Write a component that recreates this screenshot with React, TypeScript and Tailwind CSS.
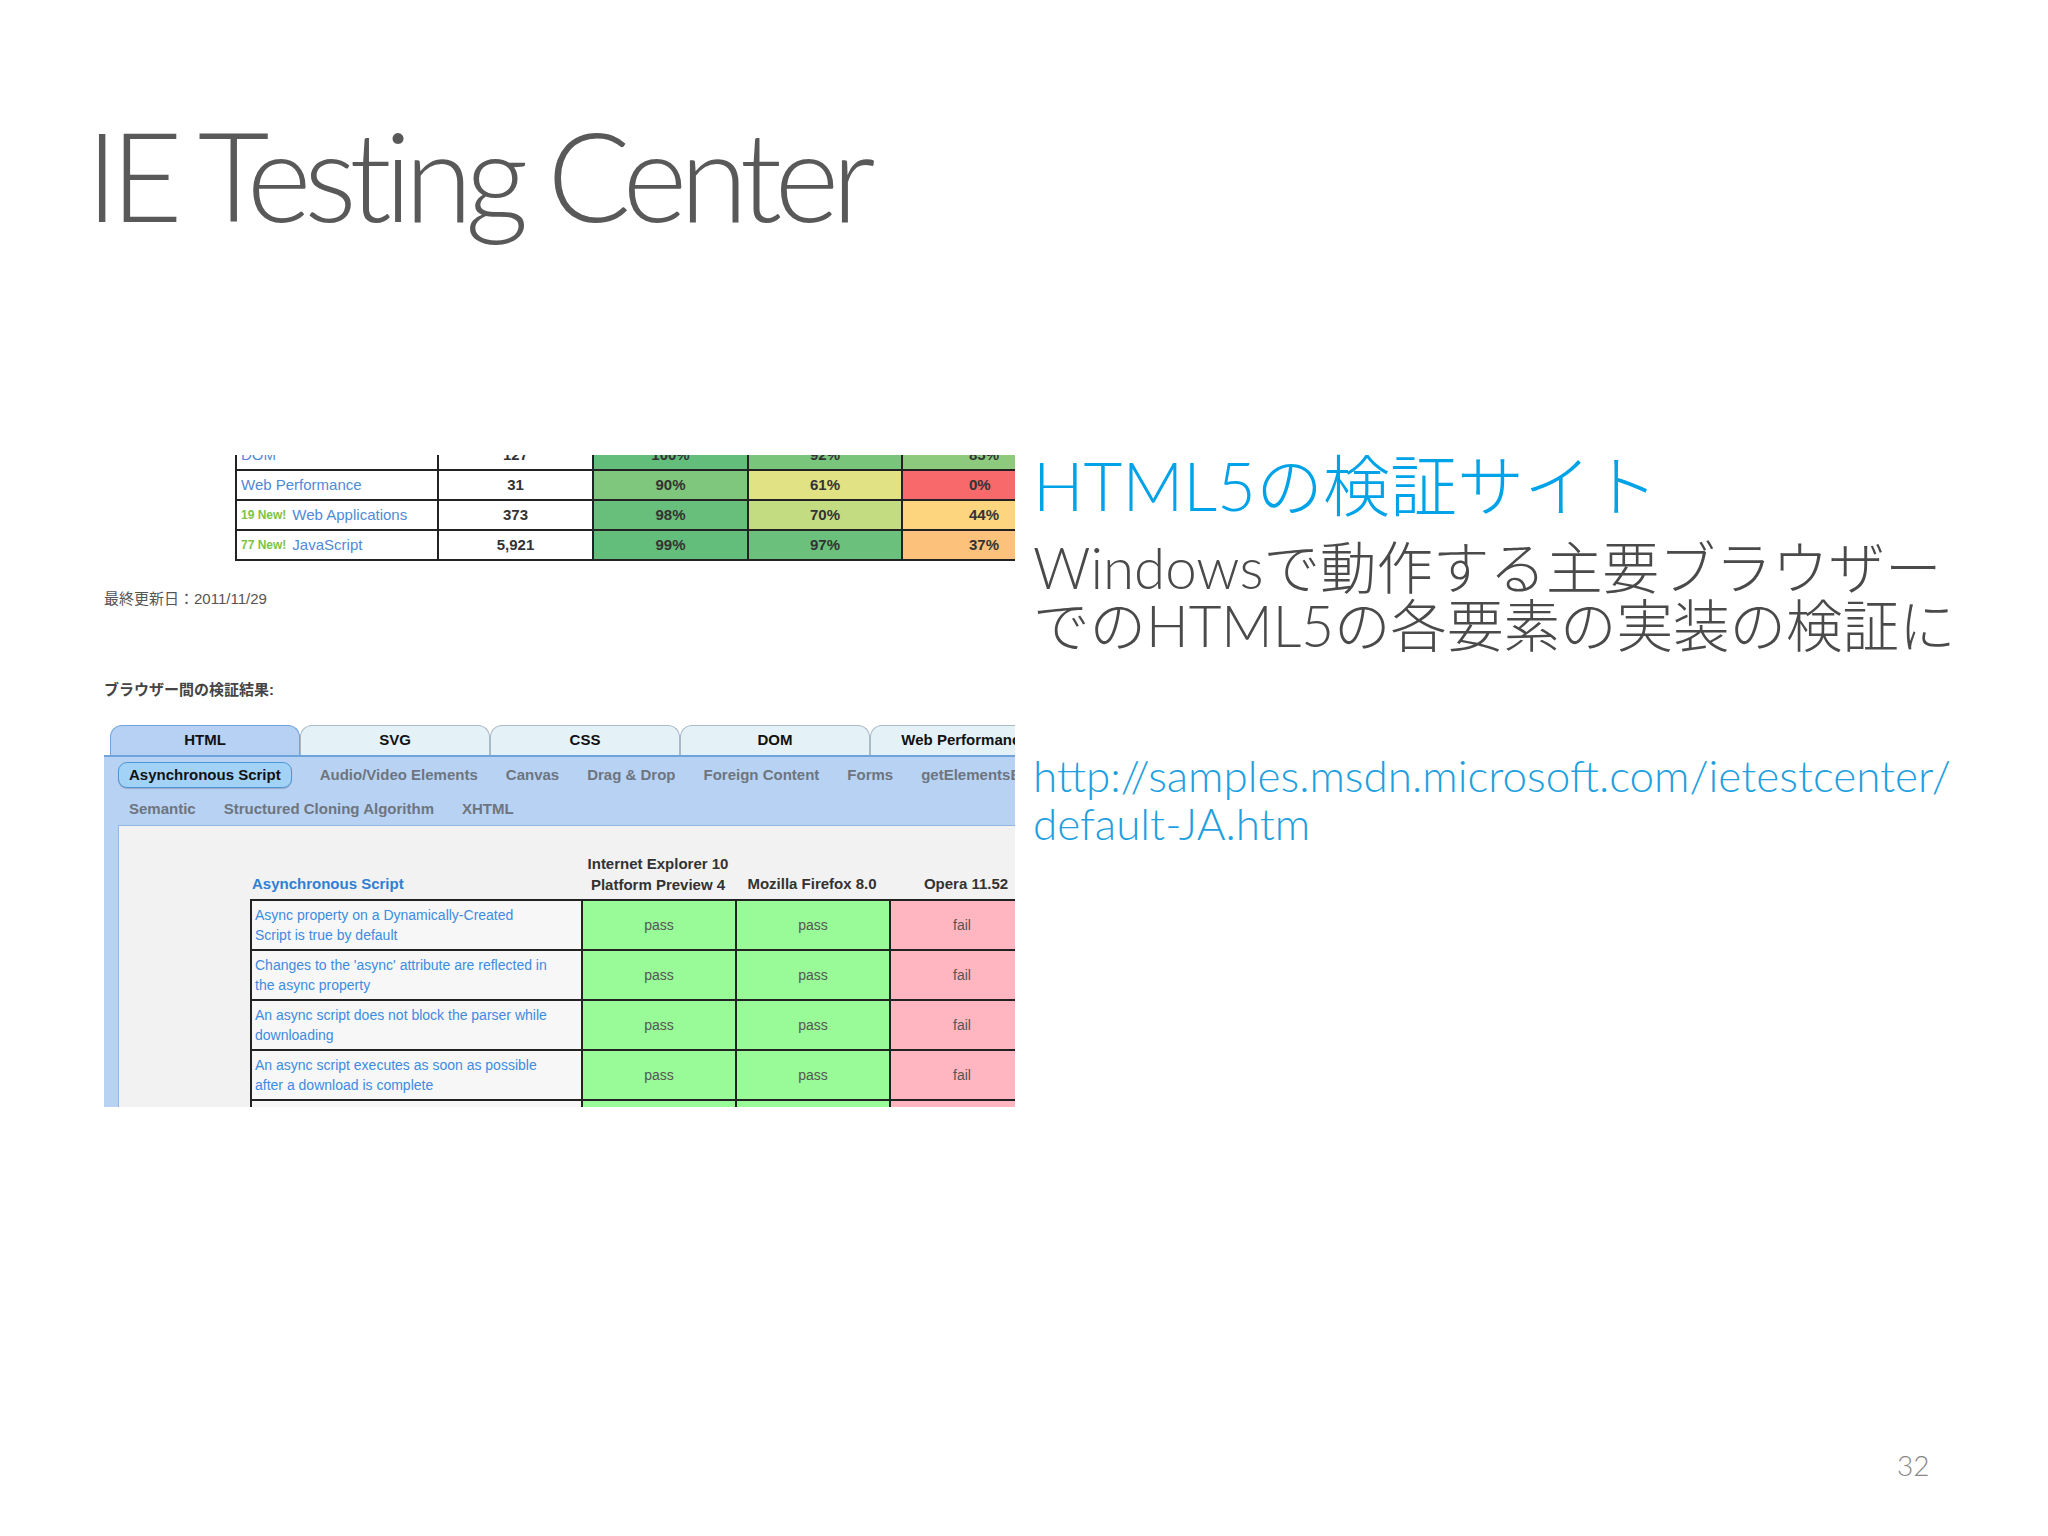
import React from 'react';

const summary = [
  { tag: '', name: 'DOM', count: '127', cells: [['100%', 'bg-[#63be7b]'], ['92%', 'bg-[#7ac57c]'], ['85%', 'bg-[#8dca7e]']] },
  { tag: '', name: 'Web Performance', count: '31', cells: [['90%', 'bg-[#7fc77c]'], ['61%', 'bg-[#e0e283]'], ['0%', 'bg-[#f8696b]']] },
  { tag: '19 New!', name: 'Web Applications', count: '373', cells: [['98%', 'bg-[#67bf7b]'], ['70%', 'bg-[#c4dc81]'], ['44%', 'bg-[#fdd57f]']] },
  { tag: '77 New!', name: 'JavaScript', count: '5,921', cells: [['99%', 'bg-[#64be7b]'], ['97%', 'bg-[#6bc07b]'], ['37%', 'bg-[#fcc27b]']] },
];

const tabs = ['HTML', 'SVG', 'CSS', 'DOM', 'Web Performance'];
const subTabs = ['Audio/Video Elements', 'Canvas', 'Drag & Drop', 'Foreign Content', 'Forms', 'getElementsByClassName'];

const tests = [
  ['Async property on a Dynamically-Created', 'Script is true by default'],
  ["Changes to the 'async' attribute are reflected in", 'the async property'],
  ['An async script does not block the parser while', 'downloading'],
  ['An async script executes as soon as possible', 'after a download is complete'],
  ['', ''],
];

const shotFont = { fontFamily: '"Liberation Sans Narrow", "Liberation Sans", "Noto Sans CJK JP", sans-serif' };

function Screenshot() {
  return (
    <div className="w-[911px] h-[652px] overflow-hidden bg-white flex flex-col" style={shotFont}>
      {/* summary table */}
      <div className="ml-[131px] -mt-[14px] grid grid-cols-[202px_155px_155px_154px_154px] border-l-2 border-[#222] w-max">
        {summary.map((r, i) => (
          <React.Fragment key={i}>
            <div className="h-[30px] border-b-2 border-r-2 border-[#222] flex items-center px-[4px] gap-[6px]">
              {r.tag && <span className="text-[12px] font-bold text-[#7cc443]">{r.tag}</span>}
              <span className="text-[15px] text-[#4f8ad6]">{r.name}</span>
            </div>
            <div className="h-[30px] border-b-2 border-r-2 border-[#222] flex items-center justify-center text-[15px] font-bold text-[#333]">
              {r.count}
            </div>
            {r.cells.map(([v, c], j) => (
              <div key={j} className={`h-[30px] border-b-2 border-r-2 border-[#222] flex items-center ${j === 2 ? 'justify-start pl-[66px]' : 'justify-center'} text-[15px] font-bold text-[#333] ${c}`}>
                {v}
              </div>
            ))}
          </React.Fragment>
        ))}
      </div>

      <div className="mt-[28px] text-[15px] text-[#555] leading-[20px]">最終更新日：2011/11/29</div>
      <div className="mt-[71px] text-[15px] font-bold text-[#444] leading-[20px]">ブラウザー間の検証結果:</div>

      {/* tabs */}
      <div className="mt-[25px] flex pl-[6px] h-[30px] items-end">
        {tabs.map((t, i) => (
          <div
            key={t}
            className={`w-[190px] shrink-0 h-[30px] rounded-t-[12px] border border-b-0 flex items-center justify-center text-[15px] font-bold text-[#111] whitespace-nowrap ${i === 0 ? 'bg-[#b6d1f3] border-[#6ea3dc]' : 'bg-[#e4f2f8] border-[#a9b9c6]'}`}
          >
            {t}
          </div>
        ))}
      </div>

      {/* blue panel */}
      <div className="bg-[#b8d2f3] border-t-2 border-[#6ea3dc] flex-1 flex flex-col">
        <div className="flex items-center h-[36px] pl-[14px] gap-[28px] whitespace-nowrap">
          <div className="h-[26px] px-[10px] rounded-[9px] bg-[#a3d2f7] border border-[#4f96d8] flex items-center text-[15px] font-bold text-[#111] shadow-[0_1px_1px_rgba(0,0,0,0.2)]">
            Asynchronous Script
          </div>
          {subTabs.map((s) => (
            <span key={s} className="text-[15px] font-bold text-[#6d7580]">{s}</span>
          ))}
        </div>
        <div className="flex items-center h-[32px] pl-[25px] gap-[28px] whitespace-nowrap">
          {['Semantic', 'Structured Cloning Algorithm', 'XHTML'].map((s) => (
            <span key={s} className="text-[15px] font-bold text-[#6d7580]">{s}</span>
          ))}
        </div>

        {/* inner content */}
        <div className="ml-[14px] flex-1 bg-[#f2f2f2] border-t border-l border-[#8fb6e4] pt-[27px]">
          <div className="ml-[131px] grid grid-cols-[331px_154px_154px_154px] w-max items-end">
            <div className="text-[15px] font-bold text-[#2f80d4] pl-[2px] pb-[4px]">Asynchronous Script</div>
            <div className="text-[15px] font-bold text-[#333] text-center leading-[21px] pb-[4px]">Internet Explorer 10<br />Platform Preview 4</div>
            <div className="text-[15px] font-bold text-[#333] text-center pb-[4px]">Mozilla Firefox 8.0</div>
            <div className="text-[15px] font-bold text-[#333] text-center pb-[4px]">Opera 11.52</div>
          </div>
          <div className="ml-[131px] grid grid-cols-[331px_154px_154px_154px] w-max border-t-2 border-l-2 border-[#222]">
            {tests.map((t, i) => (
              <React.Fragment key={i}>
                <div className="h-[50px] border-b-2 border-r-2 border-[#222] bg-[#f7f7f7] px-[3px] flex flex-col justify-center text-[14px] leading-[20px] text-[#3d8be0]">
                  <span>{t[0]}</span>
                  <span>{t[1]}</span>
                </div>
                <div className="h-[50px] border-b-2 border-r-2 border-[#222] bg-[#98fb98] flex items-center justify-center text-[14px] text-[#555]">pass</div>
                <div className="h-[50px] border-b-2 border-r-2 border-[#222] bg-[#98fb98] flex items-center justify-center text-[14px] text-[#555]">pass</div>
                <div className="h-[50px] border-b-2 border-r-2 border-[#222] bg-[#ffb6c1] flex items-center justify-start pl-[62px] text-[14px] text-[#555]">fail</div>
              </React.Fragment>
            ))}
          </div>
        </div>
      </div>
    </div>
  );
}

const App: React.FC = () => {
  const latin = { fontFamily: '"Open Sans", "Noto Sans CJK JP", sans-serif' };
  const light = { fontFamily: 'Lato, "Noto Sans CJK JP", sans-serif' };
  return (
    <div className="w-[2048px] h-[1536px] bg-white relative overflow-hidden" style={latin}>
      <h1 className="pt-[112px] pl-[86px] text-[124px] leading-none font-light text-[#595959] tracking-[-0.06em]" style={light}>
        IE Testing Center
      </h1>

      <div className="mt-[219px] flex items-start">
        <div className="ml-[104px]">
          <Screenshot />
        </div>
        <div className="ml-[18px] flex flex-col" style={light}>
          <div className="text-[67px] leading-[68px] font-light text-[#00a2e8] mt-[-4px]">HTML5の検証サイト</div>
          <div className="mt-[19px] text-[56.5px] leading-[58px] font-light text-[#4a4a4a]">
            Windowsで動作する主要ブラウザー<br />でのHTML5の各要素の実装の検証に
          </div>
          <div className="mt-[97px] text-[44px] leading-[48px] font-light text-[#1ea0e0]">
            http://samples.msdn.microsoft.com/ietestcenter/<br />default-JA.htm
          </div>
        </div>
      </div>

      <div className="absolute left-[1897px] top-[1444px] text-[28px] text-[#888] font-light" style={light}>32</div>
    </div>
  );
};

export default App;
